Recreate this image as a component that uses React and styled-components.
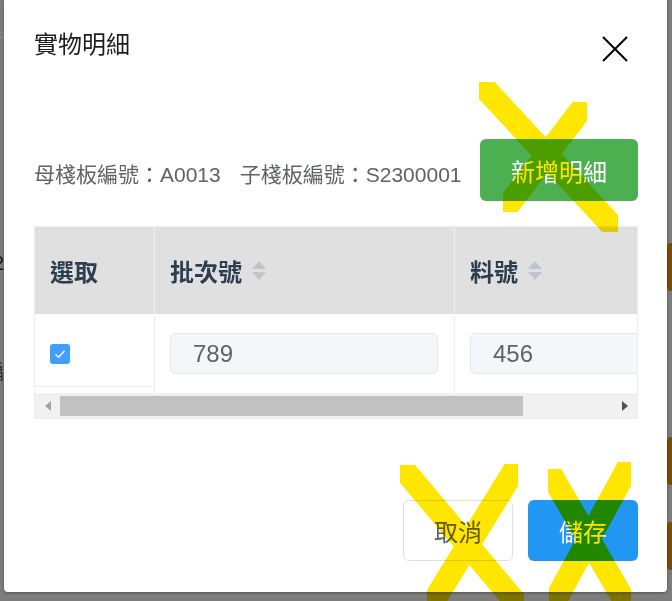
import React from "react";
import styled, { createGlobalStyle } from "styled-components";

const GlobalStyle = createGlobalStyle`
  html, body { margin: 0; padding: 0; }
  body {
    font-family: "Liberation Sans", "Noto Sans CJK TC", sans-serif;
    background: #7d7d7d;
  }
  * { box-sizing: border-box; }
`;

const Screen = styled.div`
  position: relative;
  width: 672px;
  height: 601px;
  overflow: hidden;
  background: #7d7d7d;
`;

/* dimmed page behind the dialog */
const BgPage = styled.div`
  display: flex;
  justify-content: space-between;
  height: 100%;
`;

const BgLeft = styled.div`
  display: flex;
  flex-direction: column;
  width: 40px;
  margin-left: -20px;
`;

const BgRule = styled.div`
  margin-top: 37px;
  height: 1px;
  background: #8e8e8e;
`;

const BgText = styled.div`
  margin-top: ${(p) => p.$gap}px;
  font-size: 20px;
  line-height: 24px;
  color: ${(p) => p.$color};
  text-align: right;
  padding-right: ${(p) => p.$shift}px;
`;

const BgRight = styled.div`
  display: flex;
  flex-direction: column;
  padding-top: 243px;
`;

const BgChip = styled.div`
  width: 60px;
  height: 48px;
  margin-right: -55px;
  margin-top: ${(p) => p.$gap}px;
  background: #7a4c0c;
  border-radius: 4px;
`;

const Modal = styled.div`
  position: absolute;
  left: 4px;
  top: 0;
  width: 663px;
  height: 592px;
  background: #fff;
  border-radius: 0 0 4px 4px;
  box-shadow: 0 1px 3px rgba(0, 0, 0, 0.35);
  padding: 27px 29px 31px 30px;
  display: flex;
  flex-direction: column;
`;

const Header = styled.div`
  display: flex;
  justify-content: space-between;
  align-items: flex-start;
  height: 36px;
`;

const Title = styled.h2`
  margin: 0;
  font-size: 24px;
  line-height: 36px;
  font-weight: 400;
  color: #1e1e1e;
`;

const CloseButton = styled.button`
  width: 26px;
  height: 26px;
  margin: 9px 10px 0 0;
  padding: 0;
  border: none;
  background: transparent;
  display: flex;
  svg { display: block; }
`;

const InfoRow = styled.div`
  margin-top: 76px;
  display: flex;
  align-items: center;
  justify-content: space-between;
  height: 62px;
`;

const InfoText = styled.div`
  margin-top: 10px;
  font-size: 21px;
  line-height: 30px;
  color: #606266;
  display: flex;
  gap: 19px;
  white-space: nowrap;
`;

const BaseButton = styled.button`
  font-family: inherit;
  font-size: 24px;
  border-radius: 6px;
  cursor: pointer;
  padding: 0;
  display: flex;
  align-items: center;
  justify-content: center;
`;

const AddButton = styled(BaseButton)`
  width: 158px;
  height: 62px;
  border: none;
  background: #4caf50;
  color: #fff;
`;

const TableFrame = styled.div`
  margin-top: 25px;
  width: 604px;
  border: 1px solid #ebeef5;
  overflow: hidden;
`;

const Grid = styled.div`
  display: grid;
  grid-template-columns: 120px 300px 1fr;
`;

const HeadCell = styled.div`
  height: 87px;
  background: #e0e0e0;
  border-right: ${(p) => (p.$last ? "none" : "1px solid #eef0f4")};
  padding-left: 15px;
  display: flex;
  align-items: center;
  font-size: 24px;
  font-weight: 700;
  color: #2c3e50;
  white-space: nowrap;
`;

const SortCaret = styled.span`
  display: inline-flex;
  flex-direction: column;
  gap: 3px;
  margin-left: 10px;
  &::before,
  &::after {
    content: "";
    width: 0;
    height: 0;
    border-left: 7px solid transparent;
    border-right: 7px solid transparent;
  }
  &::before { border-bottom: 8px solid #c0c4cc; }
  &::after { border-top: 8px solid #c0c4cc; }
`;

const BodyCell = styled.div`
  height: 79px;
  border-right: ${(p) => (p.$last ? "none" : "1px solid #ebeef5")};
  padding: 0 15px;
  display: flex;
  align-items: center;
  white-space: nowrap;
  ${(p) =>
    p.$fixed &&
    `background: linear-gradient(#ebeef5, #ebeef5) 0 72px / 100% 1px no-repeat;`}
`;

const Checkbox = styled.span`
  width: 20px;
  height: 20px;
  border-radius: 3px;
  background: #409eff;
  display: flex;
  align-items: center;
  justify-content: center;
`;

const Input = styled.div`
  flex: none;
  width: 268px;
  height: 41px;
  border: 1px solid #e4e7ed;
  border-radius: 5px;
  background: #f5f6fa;
  padding-left: 22px;
  display: flex;
  align-items: center;
  font-size: 24px;
  color: #606266;
`;

const ScrollBar = styled.div`
  height: 25px;
  background: #f1f1f1;
  display: flex;
  align-items: stretch;
`;

const ScrollArrow = styled.div`
  width: 25px;
  display: flex;
  align-items: center;
  justify-content: center;
  &::before {
    content: "";
    width: 0;
    height: 0;
    border-top: 5.5px solid transparent;
    border-bottom: 5.5px solid transparent;
    ${(p) =>
      p.$dir === "left"
        ? `border-right: 6px solid #a3a3a3;`
        : `border-left: 6px solid #505050;`}
  }
`;

const ScrollTrack = styled.div`
  flex: 1;
  padding: 3px 0 2px;
  display: flex;
`;

const ScrollThumb = styled.div`
  width: ${(p) => p.$width}px;
  background: #c1c1c1;
`;

const Footer = styled.div`
  margin-top: auto;
  display: flex;
  justify-content: flex-end;
  gap: 15px;
`;

const CancelButton = styled(BaseButton)`
  width: 110px;
  height: 61px;
  border: 1px solid #dcdfe6;
  background: #fff;
  color: #606266;
`;

const SaveButton = styled(BaseButton)`
  width: 110px;
  height: 61px;
  border: none;
  background: #2196f3;
  color: #fff;
`;

/* hand-drawn yellow cross marks over the picture */
const MarksLayer = styled.svg`
  position: absolute;
  left: 0;
  top: 0;
  width: 672px;
  height: 601px;
  pointer-events: none;
  mix-blend-mode: multiply;
`;

const strokes = [
  { box: [479, 82, 618, 232], dir: "tlbr" },
  { box: [503, 102, 587, 212], dir: "trbl" },
  { box: [400, 465, 524, 612], dir: "tlbr" },
  { box: [427, 464, 518, 612], dir: "trbl" },
  { box: [548, 469, 631, 612], dir: "tlbr" },
  { box: [549, 462, 631, 612], dir: "trbl" },
];

function Marks() {
  return (
    <MarksLayer viewBox="0 0 672 601">
      <defs>
        {strokes.map((s, i) => (
          <clipPath id={`mk${i}`} key={i}>
            <rect
              x={s.box[0]}
              y={s.box[1]}
              width={s.box[2] - s.box[0]}
              height={s.box[3] - s.box[1]}
            />
          </clipPath>
        ))}
      </defs>
      {strokes.map((s, i) => {
        const [x1, y1, x2, y2] = s.box;
        const pts = s.dir === "tlbr" ? [x1, y1, x2, y2] : [x2, y1, x1, y2];
        return (
          <line
            key={i}
            clipPath={`url(#mk${i})`}
            x1={pts[0]}
            y1={pts[1]}
            x2={pts[2]}
            y2={pts[3]}
            stroke="#ffe600"
            strokeWidth="23"
          />
        );
      })}
    </MarksLayer>
  );
}

export default function App() {
  return (
    <>
      <GlobalStyle />
      <Screen>
        <BgPage>
          <BgLeft>
            <BgRule />
            <BgText $gap={213} $color="#151515" $shift={16}>2</BgText>
            <BgText $gap={86} $color="#1b2a3a" $shift={16}>編</BgText>
          </BgLeft>
          <BgRight>
            <BgChip $gap={0} />
            <BgChip $gap={146} />
            <BgChip $gap={37} />
          </BgRight>
        </BgPage>
        <Modal>
          <Header>
            <Title>實物明細</Title>
            <CloseButton aria-label="close">
              <svg width="26" height="26" viewBox="0 0 26 26">
                <path d="M1 1L25 25M25 1L1 25" stroke="#000" strokeWidth="2" fill="none" />
              </svg>
            </CloseButton>
          </Header>
          <InfoRow>
            <InfoText>
              <span>母棧板編號：A0013</span>
              <span>子棧板編號：S2300001</span>
            </InfoText>
            <AddButton>新增明細</AddButton>
          </InfoRow>
          <TableFrame>
            <Grid>
              <HeadCell>選取</HeadCell>
              <HeadCell>
                批次號<SortCaret />
              </HeadCell>
              <HeadCell $last>
                料號<SortCaret />
              </HeadCell>
              <BodyCell $fixed>
                <Checkbox>
                  <svg width="12" height="10" viewBox="0 0 12 10">
                    <path d="M1.5 5.2L4.6 8.2L10.5 1.8" stroke="#fff" strokeWidth="1.3" fill="none" />
                  </svg>
                </Checkbox>
              </BodyCell>
              <BodyCell>
                <Input>789</Input>
              </BodyCell>
              <BodyCell $last>
                <Input>456</Input>
              </BodyCell>
            </Grid>
            <ScrollBar>
              <ScrollArrow $dir="left" />
              <ScrollTrack>
                <ScrollThumb $width={463} />
              </ScrollTrack>
              <ScrollArrow $dir="right" />
            </ScrollBar>
          </TableFrame>
          <Footer>
            <CancelButton>取消</CancelButton>
            <SaveButton>儲存</SaveButton>
          </Footer>
        </Modal>
        <Marks />
      </Screen>
    </>
  );
}
